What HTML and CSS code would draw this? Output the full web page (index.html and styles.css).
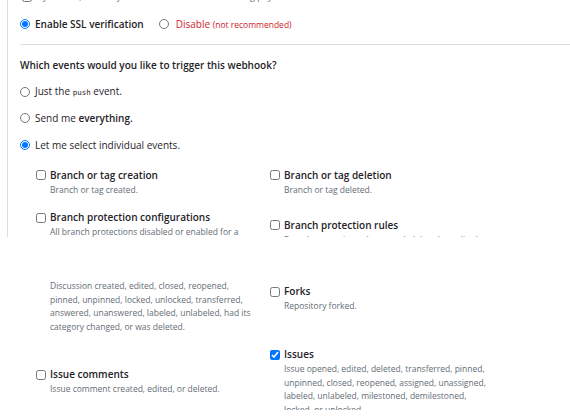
FILE: index.html
```html
<!DOCTYPE html>
<html>
<head>
<meta charset="utf-8">
<link rel="stylesheet" href="styles.css">
</head>
<body>
<div class="top">
  <div class="top-inner">
    <label class="ssl-note"><input type="checkbox" class="cb"><span>By default, we verify SSL certificates when delivering payloads.</span></label>
    <div class="ssl-row">
      <label class="radio strong"><input type="radio" name="ssl" checked><span>Enable SSL verification</span></label>
      <label class="radio danger"><input type="radio" name="ssl"><span>Disable <span class="small">(not recommended)</span></span></label>
    </div>
    <hr class="rule">
    <p class="question">Which events would you like to trigger this webhook?</p>
    <label class="radio row"><input type="radio" name="ev"><span>Just the <code>push</code> event.</span></label>
    <label class="radio row"><input type="radio" name="ev"><span>Send me <b>everything.</b></span></label>
    <label class="radio row"><input type="radio" name="ev" checked><span>Let me select individual events.</span></label>
    <div class="events first">
      <label class="event"><input type="checkbox" class="cb"><span class="txt"><span class="title">Branch or tag creation</span><span class="desc">Branch or tag created.</span></span></label>
      <label class="event"><input type="checkbox" class="cb"><span class="txt"><span class="title">Branch or tag deletion</span><span class="desc">Branch or tag deleted.</span></span></label>
      <label class="event"><input type="checkbox" class="cb"><span class="txt"><span class="title">Branch protection configurations</span><span class="desc">All branch protections disabled or enabled for a repository.</span></span></label>
      <label class="event"><input type="checkbox" class="cb"><span class="txt"><span class="title">Branch protection rules</span><span class="desc">Branch protection rule created, deleted or edited.</span></span></label>
    </div>
  </div>
</div>
<div class="bottom">
  <div class="events second">
    <label class="event"><input type="checkbox" class="cb"><span class="txt"><span class="title">Discussions</span><span class="desc">Discussion created, edited, closed, reopened, pinned, unpinned, locked, unlocked, transferred, answered, unanswered, labeled, unlabeled, had its category changed, or was deleted.</span></span></label>
    <label class="event"><input type="checkbox" class="cb"><span class="txt"><span class="title">Forks</span><span class="desc">Repository forked.</span></span></label>
    <label class="event"><input type="checkbox" class="cb"><span class="txt"><span class="title">Issue comments</span><span class="desc">Issue comment created, edited, or deleted.</span></span></label>
    <label class="event"><input type="checkbox" class="cb" checked><span class="txt"><span class="title">Issues</span><span class="desc">Issue opened, edited, deleted, transferred, pinned, unpinned, closed, reopened, assigned, unassigned, labeled, unlabeled, milestoned, demilestoned, locked, or unlocked.</span></span></label>
  </div>
</div>
</body>
</html>
```

FILE: styles.css
```css
html, body {
  margin: 0;
  padding: 0;
  background: #ffffff;
}
body {
  font-family: "Open Sans", "Noto Sans", sans-serif;
  color: #1f2328;
  width: 570px;
  overflow: hidden;
}
input {
  margin: 0;
  accent-color: #0075ff;
}
input[type="radio"], input[type="checkbox"] {
  width: 10px;
  height: 10px;
  flex: none;
}
.top {
  height: 237px;
  overflow: hidden;
  margin-left: 7px;
  border-left: 1px solid #d8dee4;
  padding-left: 12px;
}
.top-inner {
  margin-top: -10px;
}
.ssl-note {
  display: flex;
  align-items: center;
  gap: 5px;
  height: 14px;
  line-height: 14px;
  font-size: 9px;
  color: #656d76;
  padding-left: 2px;
}
.ssl-row {
  display: flex;
  align-items: center;
  gap: 15px;
  margin-top: 13px;
}
.radio {
  display: flex;
  align-items: center;
  gap: 5px;
  height: 14px;
  line-height: 14px;
  font-size: 10px;
  white-space: nowrap;
}
.radio.strong {
  font-weight: 600;
}
.radio.danger {
  color: #cf222e;
  gap: 7px;
}
.radio.danger .small {
  font-size: 8.5px;
}
.rule {
  margin: 13px 0 0 0;
  border: 0;
  border-top: 1px solid #d8dee4;
  height: 0;
}
.question {
  margin: 13px 0 0 0;
  font-size: 10px;
  font-weight: 600;
  line-height: 14px;
}
.row {
  margin-top: 12.5px;
}
code {
  font-family: "DejaVu Sans Mono", monospace;
  font-size: 7.5px;
}
b {
  font-weight: 600;
}
.events {
  display: grid;
  grid-template-columns: 234px 234px;
  row-gap: 14px;
  align-items: center;
}
.events.first {
  margin: 16px 0 0 16px;
}
.events.first .event:nth-child(4) {
  margin-top: 2px;
}
.bottom {
  margin-top: 43px;
  height: 130px;
  overflow: hidden;
}
.events.second {
  margin: -16px 0 0 36px;
}
.event {
  display: flex;
  align-items: flex-start;
  gap: 4px;
}
.event .cb {
  margin-top: 2.5px;
}
.txt {
  display: flex;
  flex-direction: column;
  max-width: 202px;
}
.title {
  font-size: 10px;
  font-weight: 600;
  line-height: 15px;
}
.desc {
  font-size: 8.5px;
  line-height: 13.5px;
  color: #656d76;
}
```
